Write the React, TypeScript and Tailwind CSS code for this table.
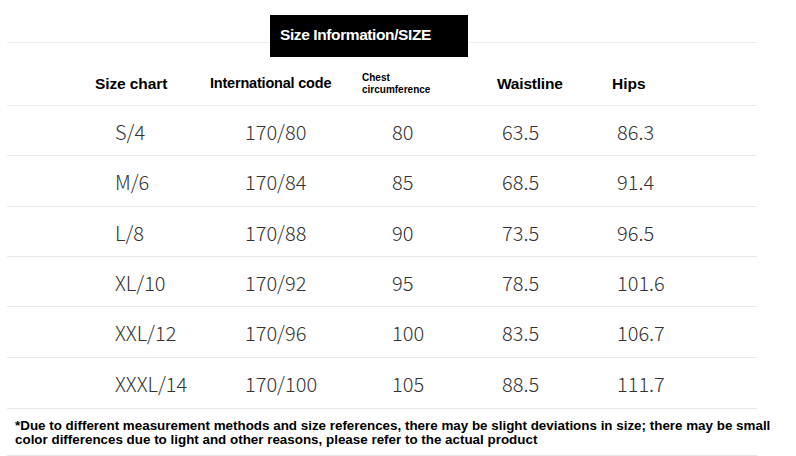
const rows = [
  { size: "S/4", code: "170/80", chest: "80", waist: "63.5", hips: "86.3", h: "h-[50px]" },
  { size: "M/6", code: "170/84", chest: "85", waist: "68.5", hips: "91.4", h: "h-[51px]" },
  { size: "L/8", code: "170/88", chest: "90", waist: "73.5", hips: "96.5", h: "h-[50px]" },
  { size: "XL/10", code: "170/92", chest: "95", waist: "78.5", hips: "101.6", h: "h-[50px]" },
  { size: "XXL/12", code: "170/96", chest: "100", waist: "83.5", hips: "106.7", h: "h-[51px]" },
  { size: "XXXL/14", code: "170/100", chest: "105", waist: "88.5", hips: "111.7", h: "h-[51px]" },
];

const cols = "grid grid-cols-[115px_152px_135px_115px_1fr] pl-[88px]";

export default function App() {
  return (
    <div className="h-[456px] w-[796px] overflow-hidden bg-white">
      <div className="ml-[7px] w-[750px]">
        <div className="h-[43px] border-b border-[#ececec] pt-[15px]">
          <div className="relative z-10 ml-[263px] flex h-[42px] w-[198px] items-start bg-black pl-[10px] pt-[8px]">
            <span className="font-['Liberation_Sans',sans-serif] text-[15.5px] font-bold tracking-[-0.4px] text-white">
              Size Information/SIZE
            </span>
          </div>
        </div>

        <div className={`${cols} h-[63px] items-center border-b border-[#ececec] pt-[20px] font-['Liberation_Sans',sans-serif] font-bold text-black`}>
          <span className="text-[15.5px] tracking-[-0.1px]">Size chart</span>
          <span className="text-[14.5px] tracking-[-0.2px]">International code</span>
          <span className="text-[10px] leading-[12px]">
            Chest
            <br />
            circumference
          </span>
          <span className="text-[15.5px] tracking-[-0.2px]">Waistline</span>
          <span className="text-[15.5px]">Hips</span>
        </div>

        {rows.map((r) => (
          <div
            key={r.size}
            className={`${cols} ${r.h} items-center border-b border-[#e8e8e8] pt-[2px] font-['Noto_Sans_CJK_SC','Noto_Sans',sans-serif] text-[20px] font-light text-[#333]`}
          >
            <span className="pl-[20px]">{r.size}</span>
            <span className="pl-[35px]">{r.code}</span>
            <span className="pl-[30px]">{r.chest}</span>
            <span className="pl-[5px]">{r.waist}</span>
            <span className="pl-[5px]">{r.hips}</span>
          </div>
        ))}

        <div className="h-[47px] border-b border-[#e4e4e4] pl-[8px] pt-[10px]">
          <p className="w-[780px] font-['Liberation_Sans',sans-serif] text-[13.4px] font-bold leading-[14px] text-black">
            *Due to different measurement methods and size references, there may be slight deviations in size; there may be small
            <br />
            color differences due to light and other reasons, please refer to the actual product
          </p>
        </div>
      </div>
    </div>
  );
}
